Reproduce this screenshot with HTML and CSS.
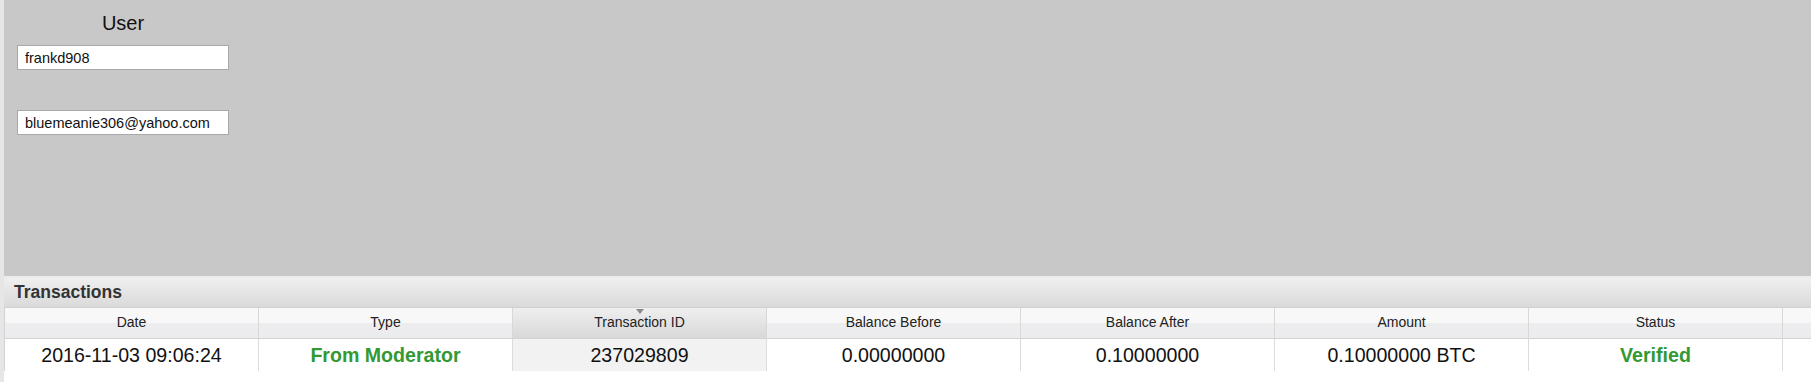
FILE: index.html
```html
<!DOCTYPE html>
<html lang="en">
<head>
  <meta charset="UTF-8" />
  <title>User Transactions</title>
  <link rel="stylesheet" href="styles.css">
</head>
<body>
  <div class="page">
    <div class="user-panel">
      <div class="user-label">User</div>
      <input class="user-input" type="text" value="frankd908">
      <input class="user-input email" type="text" value="bluemeanie306@yahoo.com">
    </div>

    <div class="grid-title">Transactions</div>
    <div class="grid">
      <div class="grid-head">
        <div class="hcell">Date</div>
        <div class="hcell">Type</div>
        <div class="hcell sorted"><span class="sort-arrow"></span>Transaction ID</div>
        <div class="hcell">Balance Before</div>
        <div class="hcell">Balance After</div>
        <div class="hcell">Amount</div>
        <div class="hcell">Status</div>
        <div class="hcell last"></div>
      </div>
      <div class="grid-row">
        <div class="cell">2016-11-03 09:06:24</div>
        <div class="cell green">From Moderator</div>
        <div class="cell sorted">237029809</div>
        <div class="cell">0.00000000</div>
        <div class="cell">0.10000000</div>
        <div class="cell">0.10000000 BTC</div>
        <div class="cell green">Verified</div>
        <div class="cell last"></div>
      </div>
    </div>
  </div>
</body>
</html>
```

FILE: styles.css
```css
body {
  margin: 0;
  font-family: "Liberation Sans", Arial, sans-serif;
  background: #fff;
}

.page {
  border-left: 4px solid #e6e6e6;
  min-height: 382px;
  box-sizing: border-box;
}

.user-panel {
  background: #c8c8c8;
  height: 276px;
  padding: 11px 0 0 13px;
  box-sizing: border-box;
}

.user-label {
  width: 212px;
  text-align: center;
  font-size: 20px;
  line-height: 24px;
  color: #111;
  margin-bottom: 10px;
}

.user-input {
  display: block;
  width: 212px;
  height: 25px;
  box-sizing: border-box;
  border: 1px solid #a9a9a9;
  padding: 0 7px;
  font-family: "Liberation Sans", Arial, sans-serif;
  font-size: 14.5px;
  color: #111;
  background: #fff;
  outline: none;
}

.user-input.email {
  margin-top: 40px;
}

.grid-title {
  border-top: 2px solid #ececec;
  border-bottom: 1px solid #cfcfcf;
  background: linear-gradient(#efefef, #dadada);
  height: 29px;
  line-height: 29px;
  padding-left: 10px;
  font-size: 17.5px;
  font-weight: bold;
  color: #333;
}

.grid {
  border-left: 1px solid #d3d3d3;
}

.grid-head,
.grid-row {
  display: grid;
  grid-template-columns: repeat(7, 254px) 1fr;
}

.hcell {
  position: relative;
  height: 30px;
  line-height: 28px;
  text-align: center;
  font-size: 14px;
  color: #222;
  border-right: 1px solid #d8d8d8;
  border-bottom: 1px solid #d3d3d3;
  background: linear-gradient(#f9f9f9 0%, #f7f7f7 50%, #ededef 51%, #ebecee 100%);
}

.hcell.sorted {
  background: linear-gradient(#efefef, #d8d8d8);
}

.hcell.last {
  border-right: none;
}

.sort-arrow {
  position: absolute;
  top: 1px;
  left: 50%;
  margin-left: -4px;
  border-left: 4px solid transparent;
  border-right: 4px solid transparent;
  border-top: 5px solid #8a8a8a;
}

.cell {
  height: 32px;
  line-height: 32px;
  text-align: center;
  font-size: 19.6px;
  color: #111;
  border-right: 1px solid #dcdcdc;
}

.cell.sorted {
  background: #f2f2f2;
}

.cell.green {
  color: #339933;
  font-weight: bold;
}

.cell.last {
  border-right: none;
}
```
